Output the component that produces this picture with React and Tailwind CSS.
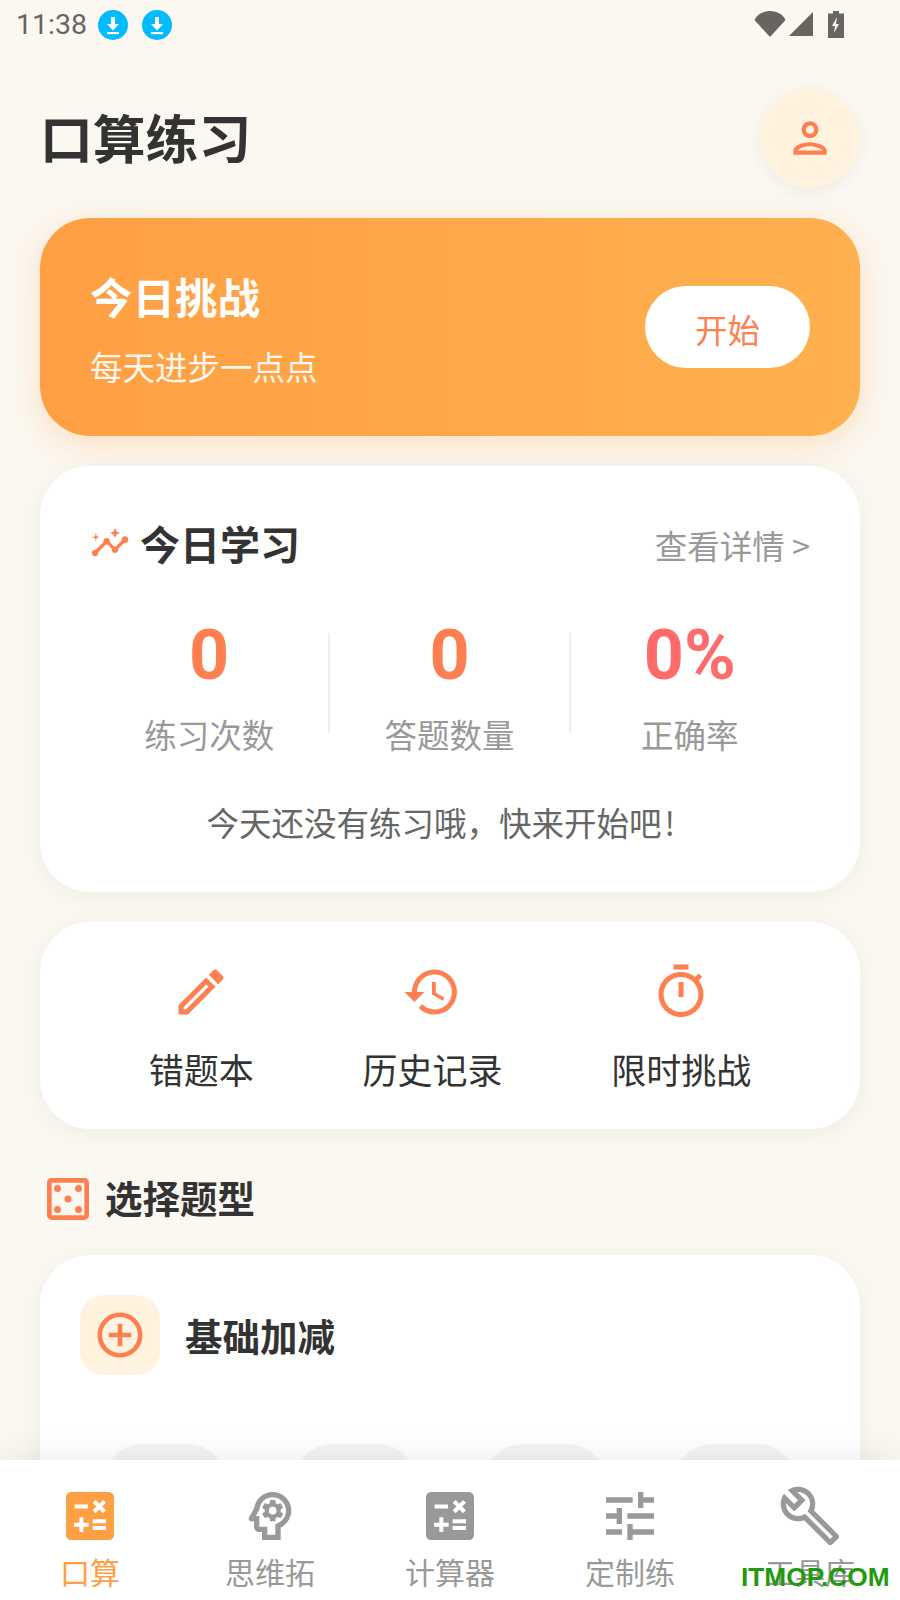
import React from "react";
import {
  MdCalculate, MdOutlinePsychology, MdTune, MdOutlineBuild, MdOutlineEdit, MdHistory,
  MdOutlineTimer, MdOutlineCasino, MdAddCircleOutline, MdOutlinePerson, MdInsights,
} from "react-icons/md";

const font = { fontFamily: '"Noto Sans CJK SC", "Noto Sans", sans-serif' };

function Dl() {
  return (
    <svg width="30" height="30" viewBox="0 0 30 30">
      <circle cx="15" cy="15" r="15" fill="#00BBFF" />
      <path d="M13 7h4v7h4l-6 6.500L9 14h4z" fill="#fff" />
      <rect x="9" y="22" width="12" height="2.200" fill="#fff" />
    </svg>
  );
}

function StatusBar() {
  return (
    <div className="h-[50px] flex items-center pl-[16px] shrink-0">
      <span className="text-[28.500px] pt-[1px] text-[#666] font-['Roboto'] w-[82px]">11:38</span>
      <div className="flex gap-[14px]"><Dl /><Dl /></div>
      <div className="ml-auto flex items-start pr-[56px] gap-[2px] -mt-[1px]">
        <svg width="32" height="26" viewBox="0 0 32 26"><path d="M16 26 L0.500 9 C3 3 10 0 16 0 C22 0 29 3 31.500 9 Z" fill="#666560" /></svg>
        <svg width="26" height="26" viewBox="0 0 26 26"><path d="M25 1V25H1Z" fill="#666560" /></svg>
        <svg className="ml-[12px]" width="16" height="27" viewBox="0 0 16 27">
          <path d="M5 0h6v2.500h5V27H0V2.500h5z" fill="#666560" />
          <path d="M9 6 4 15h3l-1 7 5-9H8z" fill="#fff" />
        </svg>
      </div>
    </div>
  );
}

function Stat({ value, label, color, divider }) {
  return (
    <div className={`flex-1 flex flex-col items-center relative ${color}`}>
      <span className="text-[70px] leading-[84px] font-bold font-['Roboto']">{value}</span>
      <span className="text-[32.500px] leading-[44px] mt-[15px] text-[#999]">{label}</span>
      {divider && <span className="absolute right-[-1px] top-[20px] w-[2px] h-[100px] bg-[#eeeeee]" />}
    </div>
  );
}

function Quick({ icon: Icon, label }) {
  return (
    <div className="flex flex-col items-center">
      <Icon size={60} className="text-[#FF7F50]" />
      <span className="text-[35px] leading-[48px] mt-[23px] text-[#333]">{label}</span>
    </div>
  );
}

function Tab({ icon: Icon, label, active }) {
  return (
    <div className={`flex-1 flex flex-col items-center pt-[24px] ${active ? "text-[#FF9F43]" : "text-[#999]"}`}>
      <Icon size={64} />
      <span className="text-[30px] leading-[40px] mt-[3px]">{label}</span>
    </div>
  );
}

export default function App() {
  return (
    <div style={font} className="relative w-[900px] h-[1600px] overflow-hidden bg-[#FBF8F1] flex flex-col">
      <div className="flex-1 min-h-0 overflow-hidden flex flex-col">
        <StatusBar />
        <div className="px-[40px] flex flex-col">
          <div className="flex items-center justify-between mt-[38px] h-[100px]">
            <h1 className="text-[52.800px] mb-[3px] font-bold text-[#333]">口算练习</h1>
            <div className="w-[100px] h-[100px] rounded-full bg-[#FFF3E0] flex items-center justify-center shadow-[0_4px_16px_rgba(0,0,0,0.05)]">
              <MdOutlinePerson size={50} className="text-[#FF7F50]" />
            </div>
          </div>

          <div className="mt-[30px] h-[218px] rounded-[50px] px-[50px] flex items-center justify-between bg-gradient-to-r from-[#FF9F43] to-[#FFB04F] shadow-[0_8px_32px_rgba(255,159,67,0.28)]">
            <div className="flex flex-col">
              <span className="text-[42.500px] leading-[58px] font-bold text-white">今日挑战</span>
              <span className="text-[32.500px] leading-[44px] mt-[19px] text-white/90">每天进步一点点</span>
            </div>
            <div className="w-[165px] h-[82px] pt-[4px] rounded-full bg-white flex items-center justify-center text-[32.500px] text-[#FF7F50]">开始</div>
          </div>

          <div className="mt-[30px] h-[426px] rounded-[50px] bg-white px-[50px] pt-[48px] flex flex-col shadow-[0_4px_24px_rgba(0,0,0,0.05)]">
            <div className="flex items-center justify-between h-[58px]">
              <div className="flex items-center">
                <MdInsights size={40} className="text-[#FF7F50]" />
                <span className="ml-[10px] text-[40px] font-bold text-[#333]">今日学习</span>
              </div>
              <span className="text-[32.500px] mt-[4px] text-[#999]">查看详情 &gt;</span>
            </div>
            <div className="flex mt-[41px] -ml-[1px]">
              <Stat value="0" label="练习次数" color="text-[#FF7F50]" divider />
              <Stat value="0" label="答题数量" color="text-[#FF7F50]" divider />
              <Stat value="0%" label="正确率" color="text-[#FF6B6B]" />
            </div>
            <p className="mt-[44px] text-center text-[32.500px] leading-[44px] text-[#666]">今天还没有练习哦，快来开始吧<span className="inline-block w-[32px] pl-[3px] text-left">!</span></p>
          </div>

          <div className="mt-[30px] h-[207px] pt-[3px] rounded-[50px] bg-white flex items-center justify-evenly shadow-[0_4px_24px_rgba(0,0,0,0.05)]">
            <Quick icon={MdOutlineEdit} label="错题本" />
            <Quick icon={MdHistory} label="历史记录" />
            <Quick icon={MdOutlineTimer} label="限时挑战" />
          </div>

          <div className="mt-[42px] flex items-center h-[56px]">
            <MdOutlineCasino size={56} className="text-[#FF7F50]" />
            <span className="ml-[9px] mb-[4px] text-[37.500px] font-bold text-[#333]">选择题型</span>
          </div>

          <div className="mt-[28px] rounded-t-[50px] bg-white px-[40px] pt-[40px] h-[300px] shadow-[0_4px_24px_rgba(0,0,0,0.05)]">
            <div className="flex items-center">
              <div className="w-[80px] h-[80px] rounded-[24px] bg-[#FFF3E0] flex items-center justify-center">
                <MdAddCircleOutline size={54} className="text-[#FF7F50]" />
              </div>
              <span className="ml-[25px] text-[37.500px] font-bold text-[#333]">基础加减</span>
            </div>
            <div className="flex gap-[66px] mt-[69px] ml-[23px]">
              <div className="w-[124px] h-[80px] rounded-[40px] bg-[#f4f4f4]" />
              <div className="w-[124px] h-[80px] rounded-[40px] bg-[#f4f4f4]" />
              <div className="w-[124px] h-[80px] rounded-[40px] bg-[#f4f4f4]" />
              <div className="w-[124px] h-[80px] rounded-[40px] bg-[#f4f4f4]" />
            </div>
          </div>
        </div>
      </div>

      <div className="relative z-10 h-[140px] shrink-0 bg-white flex shadow-[0_-4px_32px_rgba(0,0,0,0.07)]">
        <Tab icon={MdCalculate} label="口算" active />
        <Tab icon={MdOutlinePsychology} label="思维拓" />
        <Tab icon={MdCalculate} label="计算器" />
        <Tab icon={MdTune} label="定制练" />
        <Tab icon={MdOutlineBuild} label="工具库" />
      </div>

      <span className="absolute z-20 left-[741px] top-[1561px] text-[26.300px] leading-[32px] font-bold text-[#239A0E] font-['Liberation_Sans']">ITMOP.COM</span>
    </div>
  );
}
